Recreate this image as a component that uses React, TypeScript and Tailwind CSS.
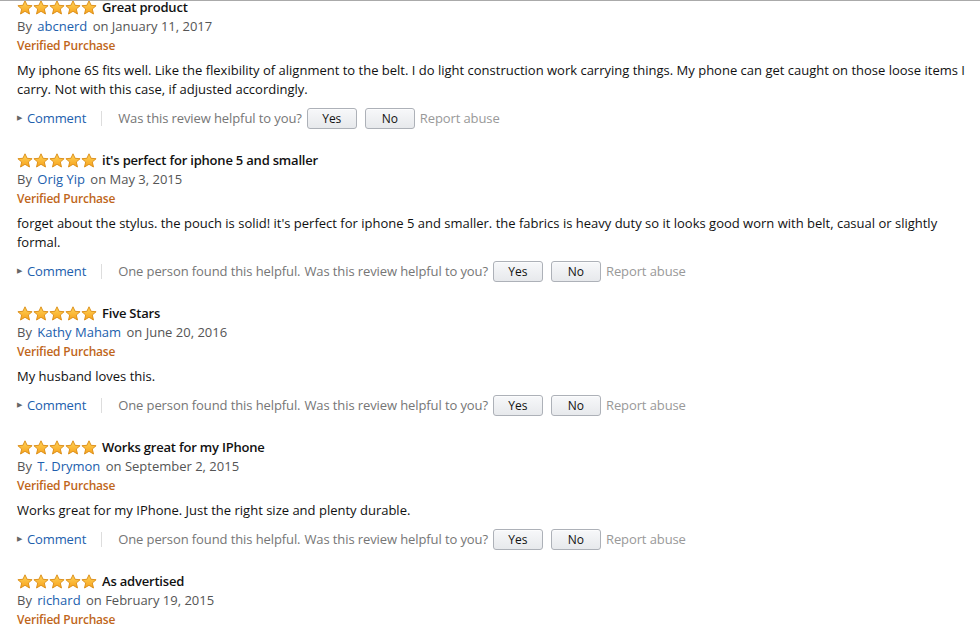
import React from "react";

type Review = {
  title: string;
  author: string;
  date: string;
  body: string;
  helpful?: string;
};

const reviews: Review[] = [
  {
    title: "Great product",
    author: "abcnerd",
    date: "January 11, 2017",
    body: "My iphone 6S fits well. Like the flexibility of alignment to the belt. I do light construction work carrying things. My phone can get caught on those loose items I carry. Not with this case, if adjusted accordingly.",
  },
  {
    title: "it's perfect for iphone 5 and smaller",
    author: "Orig Yip",
    date: "May 3, 2015",
    body: "forget about the stylus. the pouch is solid! it's perfect for iphone 5 and smaller. the fabrics is heavy duty so it looks good worn with belt, casual or slightly formal.",
    helpful: "One person found this helpful.",
  },
  {
    title: "Five Stars",
    author: "Kathy Maham",
    date: "June 20, 2016",
    body: "My husband loves this.",
    helpful: "One person found this helpful.",
  },
  {
    title: "Works great for my IPhone",
    author: "T. Drymon",
    date: "September 2, 2015",
    body: "Works great for my IPhone. Just the right size and plenty durable.",
    helpful: "One person found this helpful.",
  },
  {
    title: "As advertised",
    author: "richard",
    date: "February 19, 2015",
    body: "",
  },
];

function Star() {
  return (
    <svg width="16" height="15" viewBox="0 0 16 15">
      <defs>
        <linearGradient id="starFill" x1="0" y1="0" x2="0" y2="1">
          <stop offset="0" stopColor="#ffd45a" />
          <stop offset="1" stopColor="#f7a21b" />
        </linearGradient>
      </defs>
      <path
        d="M8 0.8 L10.1 5.3 L15.1 5.7 L11.3 9 L12.5 14 L8 11.3 L3.5 14 L4.7 9 L0.9 5.7 L5.9 5.3 Z"
        fill="url(#starFill)"
        stroke="#d98a12"
        strokeWidth="0.9"
        strokeLinejoin="round"
      />
    </svg>
  );
}

function Stars() {
  return (
    <span className="flex">
      {[0, 1, 2, 3, 4].map((i) => (
        <Star key={i} />
      ))}
    </span>
  );
}

function VoteButton({ children }: { children: React.ReactNode }) {
  return (
    <button className="h-[21px] w-[50px] rounded-[3px] border border-[#adb1b8] bg-gradient-to-b from-[#f7f8fa] to-[#e7e9ec] text-[12px] leading-none tracking-normal text-[#111] shadow-[0_1px_0_rgba(255,255,255,0.6)_inset]">
      {children}
    </button>
  );
}

function ReviewItem({ review }: { review: Review }) {
  return (
    <div className="mb-[23px]">
      <div className="flex h-[19px] items-center gap-[5px]">
        <Stars />
        <span className="text-[13px] font-semibold tracking-[-0.2px] text-[#111]">{review.title}</span>
      </div>
      <div className="h-[19px] leading-[19px] text-[#555]">
        By <span className="mx-[2px] text-[#2160ad]">{review.author}</span> on {review.date}
      </div>
      <div className="h-[19px] text-[12px] font-semibold leading-[19px] tracking-[-0.2px] text-[#c0661a]">
        Verified Purchase
      </div>
      {review.body ? (
        <>
          <p className="mt-[6px] pr-[10px] leading-[19px] text-[#111]">{review.body}</p>
          <div className="mt-[10px] flex h-[19px] items-center tracking-[-0.1px] text-[#555]">
            <span className="mr-[5px] text-[7px] text-[#666]">▶</span>
            <span className="text-[#2160ad]">Comment</span>
            <span className="ml-[15px] mr-[16px] h-[15px] w-px bg-[#ddd]" />
            {review.helpful ? <span className="mr-[4px] text-[#767676]">{review.helpful}</span> : null}
            <span className="mr-[5px] text-[#767676]">Was this review helpful to you?</span>
            <div className="flex gap-[8px]">
              <VoteButton>Yes</VoteButton>
              <VoteButton>No</VoteButton>
            </div>
            <span className="ml-[5px] text-[#999]">Report abuse</span>
          </div>
        </>
      ) : null}
    </div>
  );
}

export default function App() {
  return (
    <div className="h-[628px] w-[980px] overflow-hidden border-t border-[#aaa] bg-white font-['Open_Sans',sans-serif] text-[13px]">
      <div className="-mt-[3px] pl-[17px]">
        {reviews.map((r) => (
          <ReviewItem key={r.title} review={r} />
        ))}
      </div>
    </div>
  );
}
